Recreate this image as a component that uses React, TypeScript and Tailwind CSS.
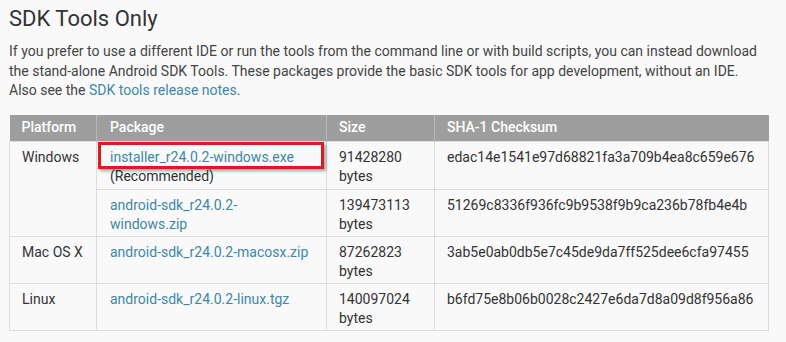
import React from 'react';

interface Row {
  platform?: string;
  rowSpan?: number;
  pkg: string[];
  note?: string;
  size: string;
  sha: string;
  highlight?: boolean;
  h: string;
}

const rows: Row[] = [
  {
    platform: 'Windows',
    rowSpan: 2,
    pkg: ['installer_r24.0.2-windows.exe'],
    note: '(Recommended)',
    size: '91428280',
    sha: 'edac14e1541e97d68821fa3a709b4ea8c659e676',
    highlight: true,
    h: 'h-[48px]',
  },
  {
    pkg: ['android-sdk_r24.0.2-', 'windows.zip'],
    size: '139473113',
    sha: '51269c8336f936fc9b9538f9b9ca236b78fb4e4b',
    h: 'h-[47px]',
  },
  {
    platform: 'Mac OS X',
    pkg: ['android-sdk_r24.0.2-macosx.zip'],
    size: '87262823',
    sha: '3ab5e0ab0db5e7c45de9da7ff525dee6cfa97455',
    h: 'h-[47px]',
  },
  {
    platform: 'Linux',
    pkg: ['android-sdk_r24.0.2-linux.tgz'],
    size: '140097024',
    sha: 'b6fd75e8b06b0028c2427e6da7d8a09d8f956a86',
    h: 'h-[47px]',
  },
];

export default function App() {
  return (
    <div className="w-[786px] h-[342px] bg-[#f9f9f9] px-[9px] pt-[5px] font-['Roboto',sans-serif] text-[#333] overflow-hidden">
      <h2 className="text-[22px] leading-[28px] text-[#333]">SDK Tools Only</h2>

      <p className="mt-[9px] text-[14px] leading-[19.5px] text-[#444] whitespace-nowrap">
        If you prefer to use a different IDE or run the tools from the command line or with build scripts, you can instead download
        <br />
        the stand-alone Android SDK Tools. These packages provide the basic SDK tools for app development, without an IDE.
        <br />
        Also see the <a className="text-[#3d88a6]">SDK tools release notes</a>.
      </p>

      {/* Downloads table */}
      <table className="mt-[14px] w-[759px] border-collapse text-[14px] leading-[19px] table-fixed">
        <colgroup>
          <col className="w-[87px]" />
          <col className="w-[230px]" />
          <col className="w-[108px]" />
          <col className="w-[334px]" />
        </colgroup>
        <thead>
          <tr className="h-[27px] bg-[#9e9e9e] text-white text-left">
            <th className="font-medium pl-[12px] border-r border-[#b8b8b8]">Platform</th>
            <th className="font-medium pl-[13px] border-r border-[#b8b8b8]">Package</th>
            <th className="font-medium pl-[12px] border-r border-[#b8b8b8]">Size</th>
            <th className="font-medium pl-[12px]">SHA-1 Checksum</th>
          </tr>
        </thead>
        <tbody>
          {rows.map((r, i) => (
            <tr key={i} className={r.h}>
              {r.platform && (
                <td
                  rowSpan={r.rowSpan}
                  className="align-top pt-[6px] pl-[12px] border border-[#ddd]"
                >
                  {r.platform}
                </td>
              )}
              <td className="align-top pt-[6px] pl-[13px] border border-[#ddd] relative">
                {r.pkg.map((p, j) => (
                  <div key={j} className="text-[#3d88a6]">
                    {p}
                  </div>
                ))}
                {r.note && <div>{r.note}</div>}
                {r.highlight && (
                  <div className="absolute left-[1px] top-0 w-[226px] h-[27px] border-[3px] border-[#dc1a20] shadow-[2px_2px_3px_rgba(0,0,0,0.35)]" />
                )}
              </td>
              <td className="align-top pt-[6px] pl-[12px] border border-[#ddd]">
                <div>{r.size}</div>
                <div>bytes</div>
              </td>
              <td className="align-top pt-[6px] pl-[12px] border border-[#ddd]">{r.sha}</td>
            </tr>
          ))}
        </tbody>
      </table>
    </div>
  );
}
